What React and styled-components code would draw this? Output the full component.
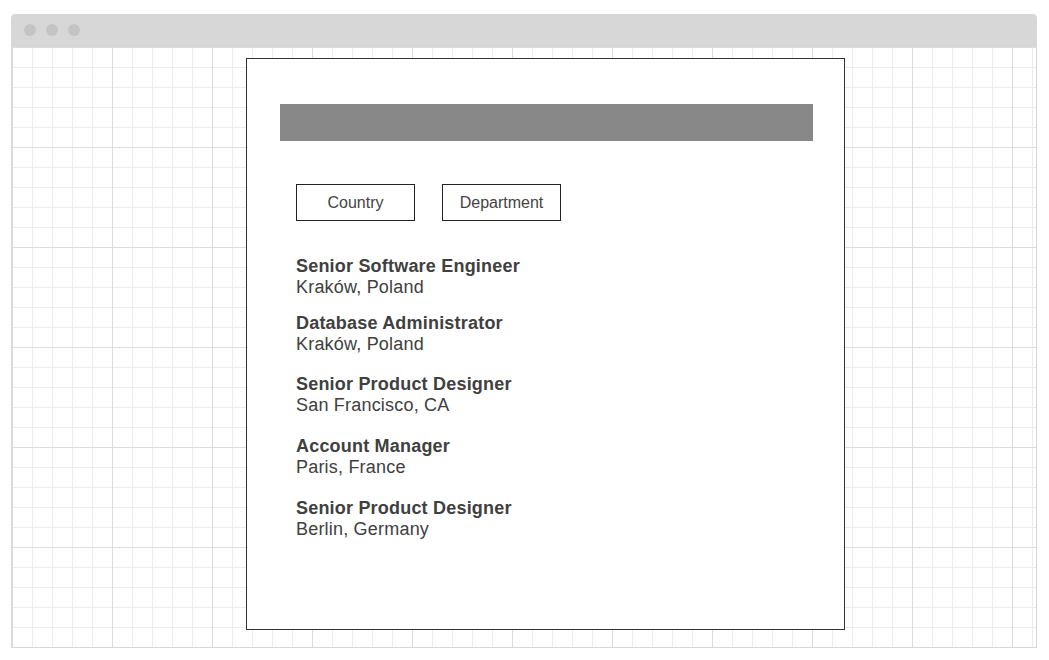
import styled, { createGlobalStyle } from "styled-components";

const GlobalStyle = createGlobalStyle`
  html, body {
    margin: 0;
    padding: 0;
    background: #ffffff;
  }
  body {
    font-family: "Liberation Sans", Arial, sans-serif;
    color: #404040;
  }
`;

const Page = styled.div`
  padding: 14px 12px 12px 11px;
`;

const Window = styled.div`
  width: 1026px;
  height: 634px;
  box-sizing: border-box;
  border: 1px solid #d8d8d8;
  border-top: none;
  border-radius: 4px 4px 0 0;
  display: flex;
  flex-direction: column;
  overflow: hidden;
`;

const TitleBar = styled.div`
  height: 33px;
  flex-shrink: 0;
  background: #d7d7d7;
  display: flex;
  align-items: center;
  gap: 10px;
  padding: 0 0 1px 13px;
  box-sizing: border-box;
  margin: 0 -1px;
`;

const Dot = styled.span`
  width: 12px;
  height: 12px;
  border-radius: 50%;
  background: #c4c4c4;
`;

const Canvas = styled.div`
  flex: 1;
  background-color: #ffffff;
  background-image:
    linear-gradient(to right, #dcdcdc 1px, transparent 1px),
    linear-gradient(to bottom, #dcdcdc 1px, transparent 1px),
    linear-gradient(to right, #ececec 1px, transparent 1px),
    linear-gradient(to bottom, #ececec 1px, transparent 1px);
  background-size: 100px 100px, 100px 100px, 20px 20px, 20px 20px;
  background-position: 0 0;
  padding: 11px 0 0 234px;
`;

const Card = styled.div`
  width: 599px;
  height: 572px;
  box-sizing: border-box;
  border: 1px solid #333333;
  background: #ffffff;
  padding: 45px 31px 0 33px;
`;

const Banner = styled.div`
  height: 37px;
  background: #888888;
`;

const Filters = styled.div`
  display: flex;
  gap: 27px;
  margin: 43px 0 0 16px;
`;

const FilterButton = styled.button`
  width: 119px;
  height: 37px;
  box-sizing: border-box;
  border: 1px solid #222222;
  background: #ffffff;
  font-family: "Liberation Sans", Arial, sans-serif;
  font-size: 16px;
  color: #444444;
  padding: 0;
  display: flex;
  align-items: center;
  justify-content: center;
`;

const JobList = styled.ul`
  list-style: none;
  margin: 35px 0 0 16px;
  padding: 0;
`;

const Job = styled.li`
  margin-top: ${(p) => p.$gap}px;
  font-size: 18px;
  line-height: 21px;
  color: #404040;
`;

const JobTitle = styled.div`
  font-weight: bold;
  letter-spacing: 0.2px;
`;

const JobPlace = styled.div`
  letter-spacing: 0.2px;
`;

const jobs = [
  { title: "Senior Software Engineer", place: "Kraków, Poland", gap: 0 },
  { title: "Database Administrator", place: "Kraków, Poland", gap: 15 },
  { title: "Senior Product Designer", place: "San Francisco, CA", gap: 19 },
  { title: "Account Manager", place: "Paris, France", gap: 20 },
  { title: "Senior Product Designer", place: "Berlin, Germany", gap: 20 },
];

export default function App() {
  return (
    <>
      <GlobalStyle />
      <Page>
        <Window>
          <TitleBar>
            <Dot />
            <Dot />
            <Dot />
          </TitleBar>
          <Canvas>
            <Card>
              <Banner />
              <Filters>
                <FilterButton>Country</FilterButton>
                <FilterButton>Department</FilterButton>
              </Filters>
              <JobList>
                {jobs.map((job, i) => (
                  <Job key={i} $gap={job.gap}>
                    <JobTitle>{job.title}</JobTitle>
                    <JobPlace>{job.place}</JobPlace>
                  </Job>
                ))}
              </JobList>
            </Card>
          </Canvas>
        </Window>
      </Page>
    </>
  );
}
